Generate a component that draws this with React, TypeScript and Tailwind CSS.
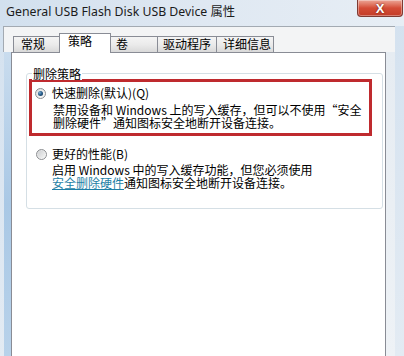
import React from "react";

const cjk = { fontFamily: '"Noto Sans CJK SC", "Noto Sans", sans-serif' };

function Radio({ checked }: { checked?: boolean }) {
  return (
    <div className="flex h-[11px] w-[11px] shrink-0 items-center justify-center rounded-full border border-[#8c8e91] bg-gradient-to-br from-[#d4d6d8] via-[#eeeeee] to-[#fbfbfb]">
      {checked ? (
        <div className="h-[5px] w-[5px] rounded-full bg-[radial-gradient(circle_at_35%_35%,#7fb0d6_0%,#2a5f8c_45%,#0f2d4a_100%)]" />
      ) : (
        <div className="h-[7px] w-[7px] rounded-full bg-gradient-to-br from-[#cfd1d3] to-[#f4f4f4]" />
      )}
    </div>
  );
}

const tabs = [
  { label: "常规", w: "w-[47px]", pl: "pl-[7px]" },
  { label: "策略", w: "w-[52px]", pl: "pl-[8px]", active: true },
  { label: "卷", w: "w-[48px]", pl: "pl-[5px]" },
  { label: "驱动程序", w: "w-[60px]", pl: "pl-[5px]" },
  { label: "详细信息", w: "w-[58px]", pl: "pl-[6px]" },
];

export default function App() {
  return (
    <div className="flex h-[356px] w-[404px] flex-col overflow-hidden bg-gradient-to-b from-[#d3e1ef] to-[#e3ebf3] text-black">
      {/* title bar */}
      <div className="relative h-[26px] shrink-0 bg-gradient-to-r from-[#d2e0ee] via-[#dfe8f2] to-[#e7eef5]">
        <div
          className="pl-[6px] pt-[4px] text-[12.3px] leading-[16px] text-[#1b1b1b]"
          style={{ fontFamily: '"Noto Sans", "Noto Sans CJK SC", sans-serif' }}
        >
          General USB Flash Disk USB Device 属性
        </div>
        <div className="absolute right-[1px] top-0 flex h-[17px] w-[46px] items-center justify-center rounded-b-[4px] border border-t-0 border-[#7e3b33] bg-gradient-to-b from-[#eba596] via-[#d44c36] to-[#c23c28] shadow-[inset_0_0_0_1px_rgba(255,255,255,0.35)]">
          <span
            className="text-[13px] font-bold leading-none text-white [text-shadow:0_0_2px_#5a1a10]"
            style={{ fontFamily: '"Liberation Sans", sans-serif' }}
          >
            X
          </span>
        </div>
      </div>

      {/* client */}
      <div className="ml-[3px] flex w-[392px] flex-1 flex-col" style={cjk}>
        {/* tab strip */}
        <div className="flex h-[26px] shrink-0 items-end border-l border-t border-[#a3aab2] bg-[#f3f4f5] pl-[9px]">
          {tabs.map((t, i) =>
            t.active ? (
              <div
                key={t.label}
                className={`relative z-10 -mb-px ${i > 0 ? "-ml-px" : ""} h-[20px] ${t.w} ${t.pl} border border-b-0 border-[#898c95] bg-white text-[12px] leading-[12px]`}
              >
                <div className="pt-px">{t.label}</div>
              </div>
            ) : (
              <div
                key={t.label}
                className={`${i > 0 ? "-ml-px" : ""} h-[16px] ${t.w} ${t.pl} border border-b-0 border-[#898c95] bg-gradient-to-b from-[#f4f4f4] via-[#ebebeb] to-[#d9d9d9] text-[12px] leading-[12px]`}
              >
                <div className="pt-px">{t.label}</div>
              </div>
            )
          )}
        </div>

        {/* panel row */}
        <div className="flex flex-1">
          <div className="ml-px w-[7px] bg-gradient-to-b from-[#c9dcee] via-[#a9c8e5] to-[#b8d2ea]" />
          <div className="flex-1 border-l border-r border-t border-[#898c95] bg-white">
            <div className="relative ml-[14px] mt-[20px] h-[136px] w-[357px] rounded-[3px] border border-[#d5dfe5]">
              <div className="absolute -top-[6px] left-[5px] bg-white px-px text-[12px] leading-[12px]">
                删除策略
              </div>

              <div className="ml-[2px] mt-[5px] h-[57px] w-[343px] border-[3px] border-[#bf2a2e]">
                <div className="mt-[5px] flex h-[12px] items-center gap-[6px] pl-[3px]">
                  <Radio checked />
                  <span className="text-[12px] leading-[12px]">快速删除(默认)(Q)</span>
                </div>
                <div className="mt-[4px] pl-[21px] text-[12px] leading-[13px]">
                  禁用设备和 Windows 上的写入缓存，但可以不使用“安全
                  <br />
                  删除硬件”通知图标安全地断开设备连接。
                </div>
              </div>

              <div className="mt-[12px] flex h-[12px] items-center gap-[5px] pl-[9px]">
                <Radio />
                <span className="text-[12px] leading-[12px]">更好的性能(B)</span>
              </div>
              <div className="mt-[3px] pl-[25px] text-[12px] leading-[13px]">
                启用 Windows 中的写入缓存功能，但您必须使用
                <br />
                <span className="text-[#1f7fa6] underline underline-offset-1">安全删除硬件</span>
                通知图标安全地断开设备连接。
              </div>
            </div>
          </div>
          <div className="w-[9px] bg-gradient-to-b from-[#e6ecf2] to-[#eef2f6]" />
        </div>
      </div>
    </div>
  );
}
